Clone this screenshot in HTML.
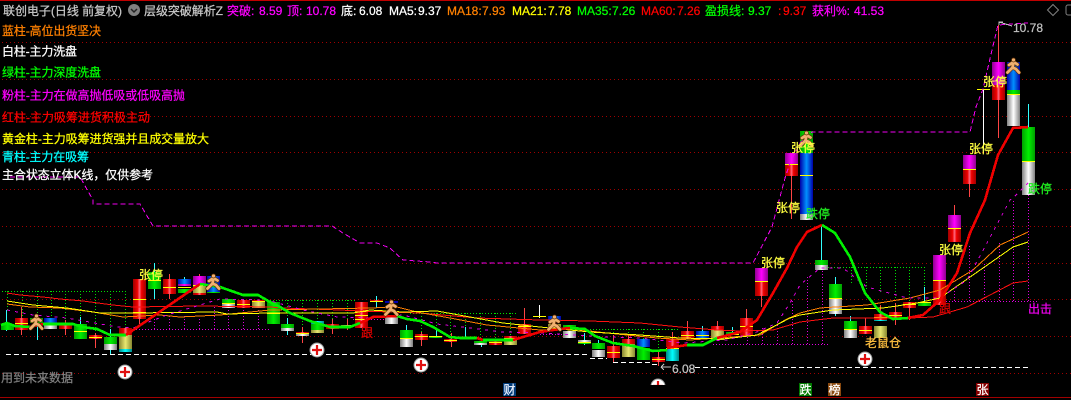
<!DOCTYPE html>
<html><head><meta charset="utf-8"><style>
html,body{margin:0;padding:0;background:#000;width:1071px;height:400px;overflow:hidden}
svg{display:block}
text{font-family:"Liberation Sans","WenQuanYi Zen Hei","Noto Sans CJK SC",sans-serif;font-size:12px;fill:currentColor;stroke:currentColor;stroke-width:.25}
.r{fill:url(#gr)}.g{fill:url(#gg)}.b{fill:url(#gb)}.w{fill:url(#gw)}.m{fill:url(#gm)}.y{fill:url(#gy)}.c{fill:url(#gc)}.l{fill:#ff0}
polyline{fill:none}
</style></head><body>
<svg width="1071" height="400" viewBox="0 0 1071 400" shape-rendering="crispEdges">
<defs>
<linearGradient id="gr"><stop offset="0" stop-color="#a00000"/><stop offset=".35" stop-color="#f00000"/><stop offset=".5" stop-color="#ff6a80"/><stop offset=".65" stop-color="#f00000"/><stop offset="1" stop-color="#a00000"/></linearGradient>
<linearGradient id="gg"><stop offset="0" stop-color="#00a000"/><stop offset=".5" stop-color="#00f000"/><stop offset="1" stop-color="#00a000"/></linearGradient>
<linearGradient id="gb"><stop offset="0" stop-color="#0000a8"/><stop offset=".5" stop-color="#0090ff"/><stop offset="1" stop-color="#0000a8"/></linearGradient>
<linearGradient id="gw"><stop offset="0" stop-color="#808080"/><stop offset=".5" stop-color="#fff"/><stop offset="1" stop-color="#808080"/></linearGradient>
<linearGradient id="gm"><stop offset="0" stop-color="#900090"/><stop offset=".5" stop-color="#ff00ff"/><stop offset="1" stop-color="#900090"/></linearGradient>
<linearGradient id="gy"><stop offset="0" stop-color="#888830"/><stop offset=".5" stop-color="#e8e870"/><stop offset="1" stop-color="#888830"/></linearGradient>
<linearGradient id="gc"><stop offset="0" stop-color="#008888"/><stop offset=".5" stop-color="#00ffff"/><stop offset="1" stop-color="#008888"/></linearGradient>
<g id="run" shape-rendering="geometricPrecision" fill="none" stroke-linecap="round" stroke-linejoin="round">
<g stroke="#5a2c00" stroke-width="4"><path d="M0.5-4L-0.5 1.5M-0.5 1.5L-5.5 6.5M-0.5 1.5L3 3L6 6.5M0.5-4L-4-1M0.5-4L4.5 -1.5"/></g>
<g stroke="#f0b070" stroke-width="2.8"><path d="M0.5-4L-0.5 1.5M-0.5 1.5L-5.5 6.5M-0.5 1.5L3 3L6 6.5M0.5-4L-4-1M0.5-4L4.5 -1.5"/></g>
<circle cx="0.5" cy="-6" r="2" fill="#f0b070" stroke="#5a2c00" stroke-width=".7"/>
</g>
<g id="plus" shape-rendering="geometricPrecision"><circle r="7" fill="#fff" stroke="#999" stroke-width="1"/><path d="M-5 0H5M0-5V5" stroke="#e01010" stroke-width="2.2"/></g>
</defs>
<rect width="1071" height="400" fill="#000"/>
<rect x="0" y="0" width="1071" height="1" fill="#c00000"/>
<rect x="0" y="397" width="1071" height="1" fill="#a00000"/>

<g stroke="#a00000" stroke-dasharray="1 3" stroke-width="1">
<path d="M2 42.5H1071M2 79.5H1071M2 116.5H1071M2 152.5H1071M2 189.5H1071M2 226.5H1071M2 263.5H1071M2 299.5H1071M2 336.5H1071M2 373.5H1071"/>
</g>

<!-- hatch -->
<g stroke="#00e000" stroke-dasharray="1 2" stroke-width="1">
<path d="M2 291.5H126M7.5 291V312M22.5 291V316M37.5 291V322M51.5 291V323M65.5 291V323M80.5 291V324M95.5 291V332M110.5 291V330M125.5 291V328"/>
<path d="M270 300.5H357M287.5 300V320M302.5 300V326M317.5 300V322M332.5 300V322M347.5 300V325"/>
<path d="M410 313.5H518M421.5 313V332M436.5 313V336M450.5 313V338M465.5 313V338M480.5 313V340M495.5 313V340M510.5 313V338"/>
<path d="M590 329.5H680M613.5 329V345M628.5 329V340M643.5 329V340M658.5 329V352M672.5 329V340"/>
<path d="M822 267.5H925M851.5 267V285M866.5 267V290M880.5 267V293M895.5 267V300M909.5 267V302M924.5 267V302"/>
</g>
<g stroke="#e000e0" stroke-dasharray="1 2" stroke-width="1">
<path d="M133 329.5H270M154.5 329V316M169.5 329V314M184.5 329V315M199.5 329V318M214.5 329V307M228.5 329V299M243.5 329V308M258.5 329V308"/>
<path d="M353 319.5H385M540 334.5H563"/>
<path d="M713 344.5H830M747.5 344V328M762.5 344V327M777.5 344V320M792.5 344V300M807.5 344V275M822.5 344V270"/>
<path d="M940 301.5H1037M954.5 301V290M969.5 301V245M984.5 301V263M999.5 301V243M1013.5 301V200M1028.5 301V183"/>
</g>

<!-- wicks -->
<g stroke-width="1">
<path stroke="#3ff" d="M6.5 310V331M37.5 323V340M80.5 317V324M110.5 329V354M154.5 263V299M184.5 277V280M287.5 318V335M376.5 296V308M406.5 325V330M436.5 329V336M465.5 327V338M481.5 338V347M584.5 333V345M598.5 340V343M702.5 326V331M732.5 327V332M821.5 225V260M835.5 277V316M850.5 316V321M924.5 287V302M1028.5 104V127"/>
<path stroke="#f44" d="M21.5 307V335M65.5 320V335M95.5 333V348M139.5 319V324M169.5 274V299M199.5 274V276M302.5 327V343M332.5 319V334M347.5 319V330M421.5 332V346M451.5 333V347M524.5 308V324M613.5 335V362M628.5 335V340M658.5 350V366M672.5 332V340M687.5 321V339M717.5 321V326M746.5 309V318M761.5 296V307M791.5 176V219M865.5 318V326M880.5 305V315M895.5 303V325M909.5 308V320M954.5 205V215M969.5 184V197M998.5 25V138"/>
<path stroke="#fff" d="M539.5 305V318M983.5 89V153"/>
</g>

<!-- candles -->
<g>
<rect class="g" x="1" y="324" width="13" height="6"/>
<rect class="r" x="15" y="318" width="13" height="12"/><rect class="l" x="15" y="323" width="13" height="1"/>
<rect class="g" x="30" y="318" width="13" height="5"/>
<rect class="b" x="44" y="318" width="13" height="6"/><rect class="w" x="44" y="325" width="13" height="4"/>
<rect class="r" x="59" y="324" width="13" height="5"/>
<rect class="g" x="74" y="324" width="13" height="15"/><rect class="l" x="74" y="331" width="13" height="1"/>
<rect class="r" x="89" y="335" width="13" height="4"/><rect class="l" x="89" y="337" width="13" height="1"/>
<rect class="g" x="104" y="337" width="13" height="7"/><rect class="w" x="104" y="344" width="13" height="6"/>
<rect class="r" x="119" y="328" width="13" height="7"/><rect class="y" x="119" y="335" width="13" height="14"/><rect class="c" x="119" y="349" width="13" height="3"/>
<rect class="r" x="133" y="279" width="13" height="40"/><rect class="l" x="133" y="299" width="13" height="1"/><rect class="l" x="133" y="312" width="13" height="1"/>
<rect class="g" x="148" y="272" width="13" height="17"/><rect class="l" x="148" y="280" width="13" height="1"/>
<rect class="r" x="163" y="279" width="13" height="15"/><rect class="l" x="163" y="287" width="13" height="1"/>
<rect class="b" x="178" y="279" width="13" height="7"/><rect class="m" x="178" y="284" width="13" height="2"/><rect class="g" x="178" y="289" width="13" height="4"/><rect class="l" x="178" y="287" width="13" height="1"/>
<rect class="m" x="193" y="276" width="13" height="9"/><rect class="y" x="193" y="285" width="13" height="8"/><rect class="r" x="193" y="293" width="13" height="2"/><rect class="l" x="193" y="285" width="13" height="1"/>
<rect class="b" x="207" y="276" width="13" height="16"/><rect class="g" x="207" y="292" width="13" height="1"/>
<rect class="g" x="222" y="299" width="13" height="4"/><rect class="w" x="222" y="304" width="13" height="4"/><rect class="l" x="222" y="303" width="13" height="1"/>
<rect class="r" x="237" y="300" width="13" height="8"/><rect class="l" x="237" y="304" width="13" height="1"/>
<rect class="r" x="252" y="300" width="13" height="2"/><rect class="y" x="252" y="302" width="13" height="6"/><rect class="l" x="252" y="301" width="13" height="1"/>
<rect class="g" x="267" y="302" width="13" height="22"/><rect class="l" x="267" y="313" width="13" height="1"/>
<rect class="g" x="281" y="324" width="13" height="4"/><rect class="w" x="281" y="328" width="13" height="3"/>
<rect class="r" x="296" y="332" width="13" height="2"/><rect class="w" x="296" y="334" width="13" height="2"/><rect class="l" x="296" y="333" width="13" height="1"/>
<rect class="c" x="311" y="321" width="13" height="3"/><rect class="g" x="311" y="324" width="13" height="6"/><rect class="y" x="311" y="330" width="13" height="3"/>
<rect class="r" x="326" y="324" width="13" height="5"/>
<rect class="y" x="341" y="325" width="13" height="2"/>
<rect class="r" x="355" y="302" width="13" height="26"/><rect class="l" x="355" y="311" width="13" height="1"/><rect class="l" x="355" y="315" width="13" height="1"/><rect class="l" x="355" y="319" width="13" height="1"/>
<rect class="r" x="370" y="300" width="13" height="1"/><rect class="l" x="370" y="301" width="13" height="1"/>
<rect fill="#0000b0" x="385" y="301" width="13" height="2"/><rect class="w" x="385" y="316" width="13" height="8"/>
<rect class="g" x="400" y="330" width="13" height="8"/><rect class="w" x="400" y="338" width="13" height="9"/><rect class="l" x="400" y="338" width="13" height="1"/>
<rect class="r" x="415" y="334" width="13" height="6"/><rect class="l" x="415" y="336" width="13" height="1"/>
<rect class="g" x="429" y="336" width="13" height="2"/><rect class="l" x="429" y="336" width="13" height="1"/>
<rect class="r" x="444" y="339" width="13" height="3"/><rect class="l" x="444" y="340" width="13" height="1"/>
<rect class="g" x="459" y="337" width="13" height="2"/>
<rect class="g" x="474" y="341" width="13" height="2"/><rect class="w" x="474" y="343" width="13" height="2"/>
<rect class="r" x="489" y="341" width="13" height="4"/><rect class="l" x="489" y="342" width="13" height="1"/>
<rect class="r" x="504" y="336" width="13" height="2"/><rect class="y" x="504" y="339" width="13" height="6"/><rect class="l" x="504" y="338" width="13" height="1"/>
<rect class="r" x="518" y="324" width="13" height="10"/><rect class="l" x="518" y="326" width="13" height="1"/>
<rect class="l" x="533" y="316" width="13" height="1"/>
<rect class="b" x="548" y="316" width="13" height="4"/><rect class="y" x="548" y="324" width="13" height="6"/>
<rect class="g" x="563" y="325" width="13" height="5"/><rect class="w" x="563" y="331" width="13" height="7"/>
<rect class="w" x="578" y="340" width="13" height="2"/><rect class="l" x="578" y="342" width="13" height="1"/><rect class="g" x="578" y="343" width="13" height="1"/>
<rect class="g" x="592" y="343" width="13" height="6"/><rect class="w" x="592" y="350" width="13" height="7"/>
<rect class="r" x="607" y="346" width="13" height="12"/><rect class="l" x="607" y="352" width="13" height="1"/>
<rect class="r" x="622" y="339" width="13" height="5"/><rect class="y" x="622" y="344" width="13" height="13"/>
<rect class="b" x="637" y="339" width="13" height="8"/><rect class="g" x="637" y="348" width="13" height="12"/>
<rect class="r" x="652" y="357" width="13" height="5"/><rect class="l" x="652" y="359" width="13" height="1"/>
<rect class="r" x="666" y="339" width="13" height="8"/><rect class="l" x="666" y="348" width="13" height="1"/><rect class="c" x="666" y="349" width="13" height="12"/>
<rect class="r" x="681" y="331" width="13" height="8"/><rect class="l" x="681" y="335" width="13" height="1"/>
<rect class="b" x="696" y="331" width="13" height="8"/><rect class="l" x="696" y="335" width="13" height="1"/>
<rect class="r" x="711" y="326" width="13" height="4"/><rect class="y" x="711" y="330" width="13" height="10"/>
<rect class="g" x="726" y="332" width="13" height="2"/><rect class="l" x="726" y="334" width="13" height="1"/>
<rect class="r" x="740" y="318" width="13" height="18"/><rect class="l" x="740" y="326" width="13" height="1"/>
<rect class="m" x="755" y="268" width="13" height="13"/><rect class="r" x="755" y="282" width="13" height="14"/><rect class="l" x="755" y="281" width="13" height="1"/>
<rect class="m" x="785" y="153" width="13" height="11"/><rect class="r" x="785" y="165" width="13" height="11"/><rect class="l" x="785" y="164" width="13" height="1"/>
<rect class="g" x="800" y="131" width="13" height="22"/><rect class="b" x="800" y="153" width="13" height="61"/><rect class="w" x="800" y="214" width="13" height="6"/><rect class="l" x="800" y="175" width="13" height="1"/>
<rect class="g" x="815" y="260" width="13" height="5"/><rect class="w" x="815" y="265" width="13" height="5"/>
<rect class="g" x="829" y="284" width="13" height="14"/><rect class="w" x="829" y="299" width="13" height="15"/><rect class="l" x="829" y="298" width="13" height="1"/>
<rect class="g" x="844" y="321" width="13" height="8"/><rect class="w" x="844" y="330" width="13" height="8"/><rect class="l" x="844" y="329" width="13" height="1"/>
<rect class="r" x="859" y="326" width="13" height="8"/><rect class="l" x="859" y="330" width="13" height="1"/>
<rect class="r" x="874" y="314" width="13" height="6"/><rect class="c" x="874" y="320" width="13" height="1"/><rect class="l" x="874" y="317" width="13" height="1"/>
<rect class="y" x="874" y="326" width="13" height="12"/>
<rect class="r" x="889" y="312" width="13" height="7"/><rect class="l" x="889" y="315" width="13" height="1"/>
<rect class="r" x="903" y="302" width="13" height="6"/><rect class="l" x="903" y="304" width="13" height="1"/>
<rect class="g" x="918" y="303" width="13" height="3"/><rect class="l" x="918" y="302" width="13" height="1"/>
<rect class="m" x="933" y="255" width="13" height="25"/><rect class="r" x="933" y="281" width="13" height="24"/><rect class="l" x="933" y="280" width="13" height="1"/>
<rect class="m" x="948" y="215" width="13" height="13"/><rect class="r" x="948" y="229" width="13" height="13"/><rect class="l" x="948" y="228" width="13" height="1"/>
<rect class="m" x="963" y="155" width="13" height="14"/><rect class="r" x="963" y="170" width="13" height="14"/><rect class="l" x="963" y="169" width="13" height="1"/>
<rect fill="#ff0" x="977" y="89" width="13" height="1"/>
<rect class="m" x="992" y="62" width="13" height="23"/><rect class="r" x="992" y="85" width="13" height="15"/>
<rect class="b" x="1007" y="62" width="13" height="28"/><rect class="g" x="1007" y="90" width="13" height="4"/><rect class="l" x="1007" y="94" width="13" height="1"/><rect class="w" x="1007" y="95" width="13" height="31"/>
<rect class="g" x="1022" y="127" width="13" height="34"/><rect class="l" x="1022" y="161" width="13" height="1"/><rect class="w" x="1022" y="162" width="13" height="33"/>
</g>

<!-- thin MA lines -->
<polyline stroke="#ff1010" points="7,293 20,295 43,297 60,299 83,301 113,305 133,307 200,306 270,307 283,308 340,310 360,311 420,313 477,318 540,320 590,321 640,323 680,327 717,330 740,331 773,330 800,322 833,318 910,318 933,317 967,307 1013,283 1028,281"/>
<polyline stroke="#ff8000" points="7,304 30,307 60,308 93,312 123,317 160,315 180,317 220,315 270,310 370,308 397,307 417,312 450,318 487,325 540,330 573,329 607,333 657,338 690,340 760,335 785,320 800,313 820,308 867,305 910,298 940,290 973,270 1000,245 1028,232"/>
<polyline stroke="#ffff00" points="7,301 33,305 67,308 100,313 132,313 217,312 227,314 270,313 353,313 370,310 403,312 437,311 470,317 503,323 540,327 590,332 640,335 680,338 723,339 757,335 790,318 800,315 833,310 883,308 917,303 940,298 983,268 1013,247 1028,242"/>

<!-- magenta dashed -->
<polyline stroke="#f000f0" stroke-dasharray="5 3" points="10,177 80,177 93,200 93,204 140,204 153,226 332,226 343,233 360,243 377,243 390,248 403,260 430,262 437,263 753,263 772,227 785,178 790,163 800,143 812,132 970,132 976,107 983,89 992,50 998,25 1028,23"/>
<polyline stroke="#e000e0" stroke-dasharray="3 5" points="7,310 33,315 67,318 117,327 133,328 167,315 200,305 220,299 267,300 303,310 337,317 370,318 403,315 437,324 470,328 503,332 540,333 607,337 640,338 683,343 727,340 757,332 777,323 790,303 800,285 820,268 843,268 867,287 907,298 940,298 967,280 987,243 1010,200 1013,198 1028,183"/>

<!-- thick bull/bear line -->
<g stroke-width="2.6" stroke-linejoin="round">
<polyline stroke="#00f000" points="1,325 7,323 15,326 30,327"/>
<polyline stroke="#f00000" points="30,327 43,324"/>
<polyline stroke="#00f000" points="43,324 73,324 83,327 97,329 110,335 126,335"/>
<polyline stroke="#f00000" points="126,335 200,284"/>
<polyline stroke="#00f000" points="200,284 220,287 243,295 258,295 270,302 280,307 290,313 310,321 330,327 350,327 360,323"/>
<polyline stroke="#f00000" points="360,323 373,317 397,316"/>
<polyline stroke="#00f000" points="397,316 407,319 420,321 433,327 450,337 460,338 477,338"/>
<polyline stroke="#f00000" points="477,338 483,340"/>
<polyline stroke="#00f000" points="483,340 513,340"/>
<polyline stroke="#f00000" points="513,340 523,337 540,332 553,330 570,328"/>
<polyline stroke="#00f000" points="570,328 585,329 595,336 613,343 633,346 653,351 667,350"/>
<polyline stroke="#f00000" points="667,348 687,345"/>
<polyline stroke="#00f000" points="687,345 703,345 717,338"/>
<polyline stroke="#f00000" points="717,338 740,332 757,320 773,293 787,268 797,247 807,232 822,225"/>
<polyline stroke="#00f000" points="822,225 835,233 850,257 865,293 880,312 893,319 908,318"/>
<polyline stroke="#f00000" points="908,318 923,315 940,300 957,273 970,233 985,200 998,155 1013,128 1028,127"/>
</g>

<!-- white dashed -->
<g stroke="#fff" stroke-dasharray="5 3"><path d="M6 354.5H590M590 358.5H607M613 362.5H650M652 364.5H658M695 367.5H1028"/></g>

<!-- runners -->
<use href="#run" x="36" y="322"/><use href="#run" x="213" y="282"/><use href="#run" x="391" y="308"/><use href="#run" x="554" y="323"/><use href="#run" x="806" y="139"/><use href="#run" x="1013" y="66"/>

<!-- plus circles -->
<use href="#plus" x="125" y="372"/><use href="#plus" x="317" y="350"/><use href="#plus" x="421" y="365"/><use href="#plus" x="865" y="359"/>
<svg x="650" y="378" width="16" height="7"><use href="#plus" x="8" y="8"/></svg>

<!-- arrows / price markers -->
<g stroke="#c0c0c0" fill="none" stroke-width="1"><path d="M999 25V22H1003M999 22L1012 26M661 367H671M661 367L664 364M661 367L664 370"/></g>
<g color="#c0c0c0"><text x="1013" y="32">10.78</text><text x="672" y="373">6.08</text></g>

<!-- chart labels -->
<g color="#ffff40">
<text x="139" y="279" textLength="24">张停</text>
<text x="761" y="267" textLength="24">张停</text>
<text x="776" y="212" textLength="24">张停</text>
<text x="791" y="152" textLength="24">张停</text>
<text x="983" y="86" textLength="24">张停</text>
<text x="969" y="153" textLength="24">张停</text>
<text x="939" y="254" textLength="24">张停</text>
</g>
<g color="#20f020"><text x="806" y="218" textLength="24">跌停</text><text x="1028" y="193" textLength="24">跌停</text></g>
<text x="865" y="347" color="#ffc040" textLength="36">老鼠仓</text>
<text x="1028" y="313" color="#f000f0" textLength="24">出击</text>
<g color="#e00000"><text x="939" y="313">跟</text><text x="361" y="337">跟</text></g>
<text x="1" y="382" color="#808080" textLength="72">用到未来数据</text>

<!-- chips -->
<rect x="503" y="383" width="13" height="13" fill="#003a78"/><text x="503.5" y="394" color="#e8f0ff">财</text>
<rect x="799" y="383" width="13" height="13" fill="#007a00"/><text x="799.5" y="394" color="#fff">跌</text>
<rect x="828" y="383" width="13" height="13" fill="#8a4a10"/><text x="828.5" y="394" color="#fff">榜</text>
<rect x="976" y="383" width="13" height="13" fill="#860000"/><text x="976.5" y="394" color="#fff">张</text>

<!-- legend -->
<text x="2" y="35" color="#ff8000" textLength="99">蓝柱-高位出货坚决</text>
<text x="2" y="55.5" color="#ffffff" textLength="75">白柱-主力洗盘</text>
<text x="2" y="76.5" color="#00ff00" textLength="99">绿柱-主力深度洗盘</text>
<text x="2" y="99.5" color="#ff00ff" textLength="183">粉柱-主力在做高抛低吸或低吸高抛</text>
<text x="2" y="121.5" color="#ff0000" textLength="148">红柱-主力吸筹进货积极主动</text>
<text x="2" y="143" color="#ffff00" textLength="207">黄金柱-主力吸筹进货强并且成交量放大</text>
<text x="2" y="161" color="#00ffff" textLength="87">青柱-主力在吸筹</text>
<text x="2" y="179" color="#ffffff" textLength="151">主合状态立体K线，仅供参考</text>

<!-- title -->
<text x="3" y="15" color="#c8c8c8" textLength="119">联创电子(日线 前复权)</text>
<g shape-rendering="geometricPrecision"><circle cx="134" cy="10" r="6" fill="#808080"/><path d="M131 9l3 3 3-3" stroke="#222" stroke-width="1.5" fill="none"/></g>
<text x="144" y="15" color="#c8c8c8" textLength="79">层级突破解析Z</text>
<g color="#ff00ff"><text x="227" y="15">突破:</text><text x="259" y="15">8.59</text><text x="287" y="15">顶:</text><text x="306" y="15">10.78</text></g>
<g color="#ffffff"><text x="341" y="15">底:</text><text x="359" y="15">6.08</text><text x="389" y="15">MA5:</text><text x="418" y="15">9.37</text></g>
<g color="#ff8000"><text x="447" y="15">MA18:</text><text x="482" y="15">7.93</text></g>
<g color="#ffff00"><text x="512" y="15">MA21:</text><text x="548" y="15">7.78</text></g>
<g color="#00ff00"><text x="577" y="15">MA35:</text><text x="612" y="15">7.26</text></g>
<g color="#ff0000"><text x="641" y="15">MA60:</text><text x="677" y="15">7.26</text></g>
<g color="#00ff00"><text x="705" y="15">盈损线:</text><text x="748" y="15">9.37</text></g>
<g color="#ff0000"><text x="778" y="15">:</text><text x="783" y="15">9.37</text></g>
<g color="#ff00ff"><text x="812" y="15">获利%:</text><text x="854" y="15">41.53</text></g>

<!-- top-right icons -->
<g fill="none" stroke="#808080" shape-rendering="geometricPrecision"><path d="M1053 4.5l5.5 5.5-5.5 5.5-5.5-5.5z"/><path d="M1075 5h-7a2 2 0 0 0-2 2v6a2 2 0 0 0 2 2h7"/></g>
</svg>
</body></html>
